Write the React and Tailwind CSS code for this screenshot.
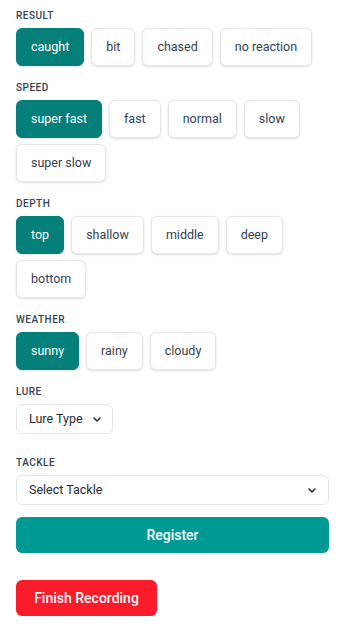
import { useState } from "react";

const SECTIONS = [
  { key: "result", label: "Result", options: ["caught", "bit", "chased", "no reaction"] },
  { key: "speed", label: "Speed", options: ["super fast", "fast", "normal", "slow", "super slow"] },
  { key: "depth", label: "Depth", options: ["top", "shallow", "middle", "deep", "bottom"] },
  { key: "weather", label: "Weather", options: ["sunny", "rainy", "cloudy"] },
];

function Label({ children }) {
  return (
    <div className="mb-1 text-[10px] leading-4 font-medium uppercase tracking-wider text-gray-700">
      {children}
    </div>
  );
}

function Chevron() {
  return (
    <svg width="8" height="5" viewBox="0 0 8 5" fill="none" className="shrink-0">
      <path d="M1 1l3 3 3-3" stroke="#1f2937" strokeWidth="1.5" strokeLinecap="round" strokeLinejoin="round" />
    </svg>
  );
}

export default function App() {
  const [picked, setPicked] = useState({
    result: "caught",
    speed: "super fast",
    depth: "top",
    weather: "sunny",
  });

  return (
    <div
      className="min-h-screen bg-white pt-2 pl-4 pr-6 pb-4"
      style={{ fontFamily: "Roboto, 'Noto Sans', sans-serif" }}
    >
      {SECTIONS.map((s) => (
        <div key={s.key} className="mb-3.5">
          <Label>{s.label}</Label>
          <div className="flex flex-wrap gap-x-[7px] gap-y-1.5">
            {s.options.map((opt) => {
              const active = picked[s.key] === opt;
              return (
                <button
                  key={opt}
                  onClick={() => setPicked((p) => ({ ...p, [s.key]: opt }))}
                  className={
                    active
                      ? "rounded-md border border-[#057f79] bg-[#057f79] px-3.5 py-2 text-[12.5px] leading-5 text-white shadow-sm"
                      : "rounded-md border border-gray-200 bg-white px-3.5 py-2 text-[12.5px] leading-5 text-gray-700 shadow-sm"
                  }
                >
                  {opt}
                </button>
              );
            })}
          </div>
        </div>
      ))}

      {/* Lure */}
      <div className="mb-[21px]">
        <Label>Lure</Label>
        <div className="inline-flex h-[30px] w-[97px] items-center justify-between rounded-md border border-gray-200 bg-white pl-3 pr-[11px] text-[12.5px] text-gray-800">
          <span className="whitespace-nowrap">Lure Type</span>
          <Chevron />
        </div>
      </div>

      {/* Tackle */}
      <div>
        <Label>Tackle</Label>
        <div className="flex h-[30px] items-center justify-between rounded-md border border-gray-200 bg-white pl-3 pr-3 text-[12.5px] text-gray-800">
          <span>Select Tackle</span>
          <Chevron />
        </div>
      </div>

      <button className="mt-3 flex h-9 w-full items-center justify-center rounded-md bg-[#009a94] text-sm font-medium text-white">
        Register
      </button>

      <button className="mt-[27px] flex h-9 w-[141px] items-center justify-center rounded-md bg-[#fa1b2b] text-sm font-medium text-white">
        Finish Recording
      </button>
    </div>
  );
}
